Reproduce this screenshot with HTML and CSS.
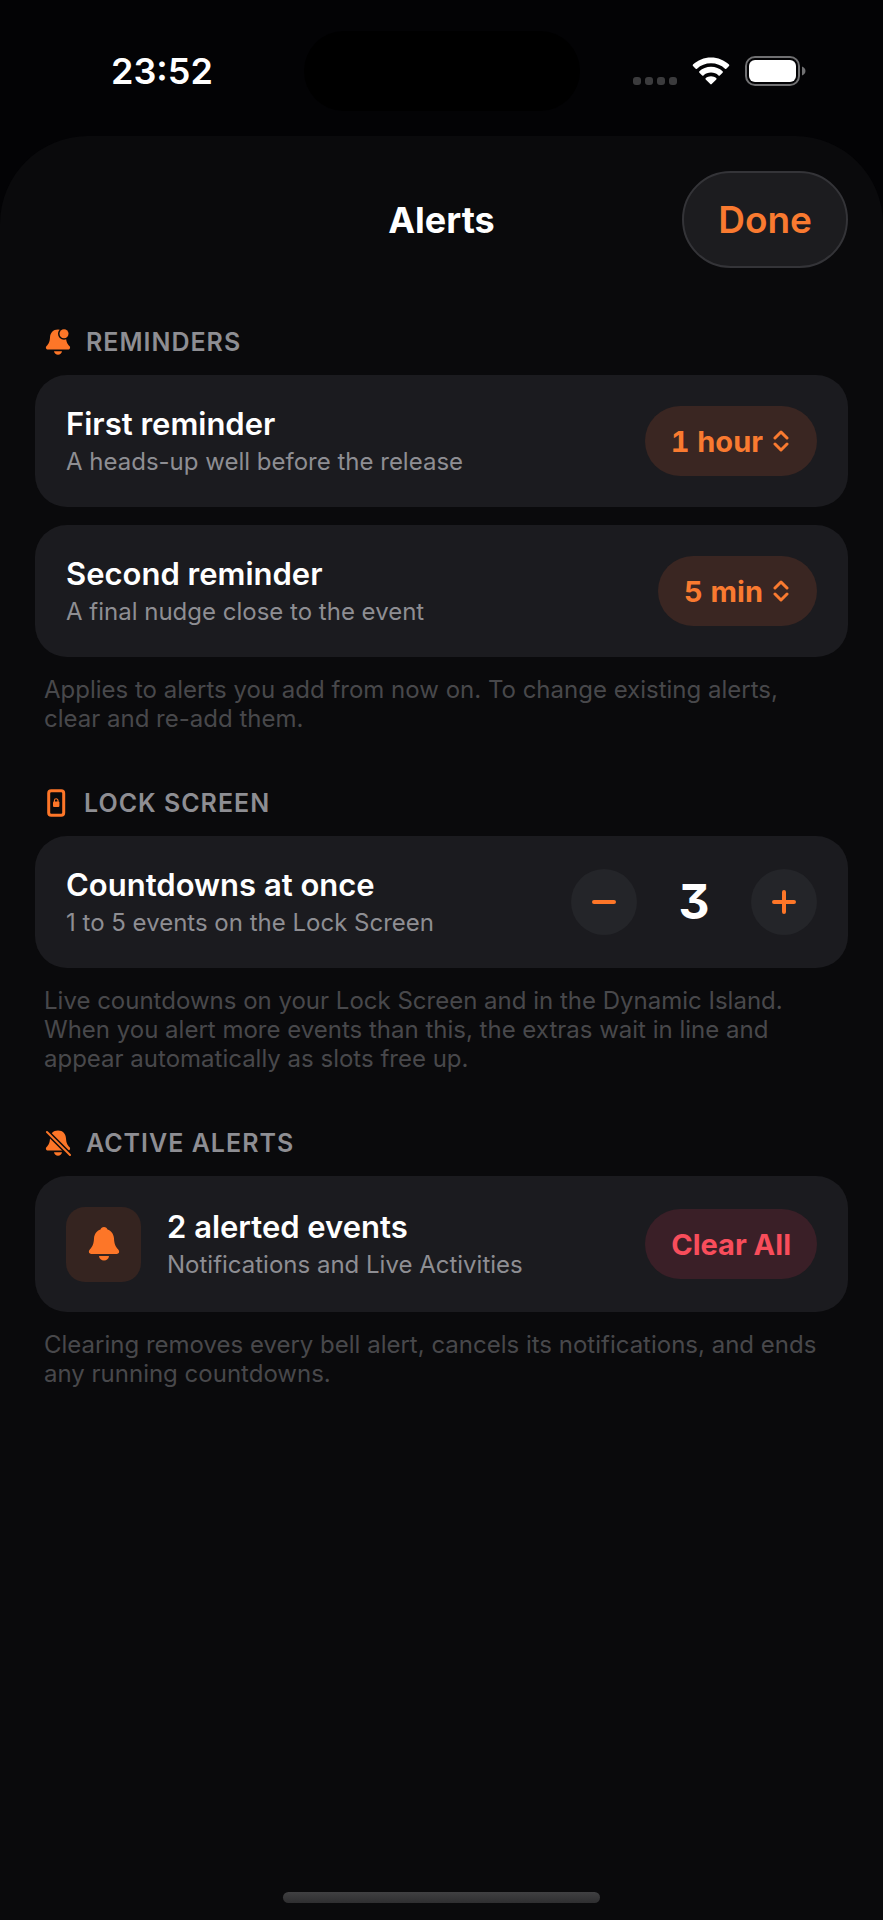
FILE: index.html
```html
<!DOCTYPE html>
<html lang="en">
<head>
  <meta charset="UTF-8">
  <meta name="viewport" content="width=device-width, initial-scale=1.0">
  <title>Alerts</title>
  <link rel="stylesheet" href="styles.css">
</head>
<body>
  <!-- Status Bar -->
  <div class="status-bar">
    <span class="time">23:52</span>
    <div class="island"></div>
    <div class="status-icons">
      <svg width="44" height="28" viewBox="0 0 44 28" fill="#3b3b3d">
        <rect x="0" y="20" width="8" height="8" rx="3"/>
        <rect x="12" y="20" width="8" height="8" rx="3"/>
        <rect x="24" y="20" width="8" height="8" rx="3"/>
        <rect x="36" y="20" width="8" height="8" rx="3"/>
      </svg>
      <svg width="38" height="28" viewBox="0 0 38 28" fill="#fff">
        <path d="M19 0.5C26 0.5 32.400 3.200 37 7.600Q37.700 8.300 37 9L34.300 11.700Q33.700 12.300 33 11.700C29.300 8.300 24.400 6.300 19 6.300S8.700 8.300 5 11.700Q4.300 12.300 3.700 11.700L1 9Q0.300 8.300 1 7.600C5.600 3.200 12 0.500 19 0.500Z"/>
        <path d="M19 9.800C23.500 9.800 27.500 11.500 30.600 14.300Q31.300 15 30.600 15.700L27.800 18.400Q27.200 19 26.500 18.400C24.500 16.600 21.900 15.600 19 15.600S13.500 16.600 11.500 18.400Q10.800 19 10.200 18.400L7.400 15.700Q6.700 15 7.400 14.300C10.500 11.500 14.500 9.800 19 9.800Z"/>
        <path d="M19 19.200C21 19.200 22.800 19.900 24.200 21Q25 21.700 24.300 22.400L19.700 27.100Q19 27.800 18.300 27.100L13.700 22.400Q13 21.700 13.800 21C15.200 19.900 17 19.200 19 19.200Z"/>
      </svg>
      <svg width="61" height="30" viewBox="0 0 61 30">
        <rect x="1" y="1" width="53" height="28" rx="9" fill="none" stroke="#707072" stroke-width="2"/>
        <rect x="4" y="4" width="47" height="22" rx="6" fill="#fff"/>
        <path d="M57 10.500C59 11.300 60.500 13 60.500 15S59 18.700 57 19.500Z" fill="#707072"/>
      </svg>
    </div>
  </div>

  <main class="sheet">
    <header class="sheet-header">
      <h1>Alerts</h1>
      <button class="done-btn">Done</button>
    </header>

    <!-- Reminders -->
    <section>
      <h2>
        <svg width="26" height="28" viewBox="0 0 26 28" fill="#fd7628">
          <path d="M13 1.500C8 1.500 5.300 5 5 9.500C4.700 14 3.800 15.600 1.600 18C0.200 19.600 1 21.500 3 21.500H23C25 21.500 25.800 19.600 24.400 18C22.200 15.600 21.300 14 21 9.500C20.700 5 18 1.500 13 1.500Z"/>
          <path d="M9 23.300H17C16.600 25.500 15 26.700 13 26.700S9.400 25.500 9 23.300Z"/>
          <circle cx="19" cy="5.800" r="6" fill="#0a0a0c"/>
          <circle cx="19" cy="5.800" r="4.500"/>
        </svg>
        Reminders
      </h2>
      <div class="card">
        <div class="card-text">
          <label class="card-title" for="first">First reminder</label>
          <p>A heads-up well before the release</p>
        </div>
        <div class="picker">
          <select id="first">
            <option>1 day</option>
            <option selected>1 hour</option>
            <option>30 min</option>
          </select>
          <svg width="16" height="22" viewBox="0 0 16 22"><path d="M2 8L8 2L14 8M2 14L8 20L14 14"/></svg>
        </div>
      </div>
      <div class="card">
        <div class="card-text">
          <label class="card-title" for="second">Second reminder</label>
          <p>A final nudge close to the event</p>
        </div>
        <div class="picker">
          <select id="second">
            <option>15 min</option>
            <option selected>5 min</option>
            <option>1 min</option>
          </select>
          <svg width="16" height="22" viewBox="0 0 16 22"><path d="M2 8L8 2L14 8M2 14L8 20L14 14"/></svg>
        </div>
      </div>
      <p class="note">Applies to alerts you add from now on. To change existing alerts, clear and re-add them.</p>
    </section>

    <!-- Lock Screen -->
    <section>
      <h2>
        <svg width="24" height="28" viewBox="0 0 24 28" fill="#fd7628">
          <rect x="3.700" y="1.700" width="15" height="24.600" rx="2.500" fill="none" stroke="#fd7628" stroke-width="3"/>
          <rect x="8" y="12.500" width="6.400" height="5.500" rx="1"/>
          <path d="M9.400 13V11.600A1.800 1.800 0 0 1 13 11.600V13" fill="none" stroke="#fd7628" stroke-width="1.100"/>
        </svg>
        Lock Screen
      </h2>
      <div class="card">
        <div class="card-text">
          <h3 class="card-title">Countdowns at once</h3>
          <p>1 to 5 events on the Lock Screen</p>
        </div>
        <div class="stepper">
          <button id="minus" aria-label="Fewer countdowns">
            <svg width="26" height="26" viewBox="0 0 26 26"><path d="M3 13H23"/></svg>
          </button>
          <output id="count">3</output>
          <button id="plus" aria-label="More countdowns">
            <svg width="26" height="26" viewBox="0 0 26 26"><path d="M3 13H23M13 3V23"/></svg>
          </button>
        </div>
      </div>
      <p class="note">Live countdowns on your Lock Screen and in the Dynamic Island. When you alert more events than this, the extras wait in line and appear automatically as slots free up.</p>
    </section>

    <!-- Active Alerts -->
    <section>
      <h2>
        <svg width="26" height="28" viewBox="0 0 26 28" fill="#fd7628">
          <path d="M13 1.500C8 1.500 5.300 5 5 9.500C4.700 14 3.800 15.600 1.600 18C0.200 19.600 1 21.500 3 21.500H23C25 21.500 25.800 19.600 24.400 18C22.200 15.600 21.300 14 21 9.500C20.700 5 18 1.500 13 1.500Z"/>
          <path d="M9 23.300H17C16.600 25.500 15 26.700 13 26.700S9.400 25.500 9 23.300Z"/>
          <path d="M2 3L25 26" stroke="#0a0a0c" stroke-width="5"/>
          <path d="M2 3L25 26" stroke="#fd7628" stroke-width="2" stroke-linecap="round"/>
        </svg>
        Active Alerts
      </h2>
      <div class="card card-events">
        <div class="bell-tile">
          <svg width="32" height="36" viewBox="0 0 32 36" fill="#fd7628">
            <path d="M16 1C14.200 1 13 2 12.500 3.500C8.700 4.800 6.300 8 6 12.500C5.700 18 4.700 20.300 2 23.300C-0.200 25.700 1 28 3.500 28H28.500C31 28 32.200 25.700 30 23.300C27.300 20.300 26.300 18 26 12.500C25.700 8 23.300 4.800 19.500 3.500C19 2 17.800 1 16 1Z"/>
            <path d="M11 30H21C20.700 32.800 18.700 34.500 16 34.500S11.300 32.800 11 30Z"/>
          </svg>
        </div>
        <div class="card-text">
          <h3 class="card-title">2 alerted events</h3>
          <p>Notifications and Live Activities</p>
        </div>
        <button class="clear-btn">Clear All</button>
      </div>
      <p class="note">Clearing removes every bell alert, cancels its notifications, and ends any running countdowns.</p>
    </section>
    <div class="home-bar"></div>
  </main>

  <script>
    const count = document.getElementById('count');

    // Keep the number of countdowns between 1 and 5
    function step(amount) {
      const next = Number(count.textContent) + amount;
      count.textContent = Math.min(5, Math.max(1, next));
    }

    document.getElementById('minus').addEventListener('click', () => step(-1));
    document.getElementById('plus').addEventListener('click', () => step(1));
  </script>
</body>
</html>
```
FILE: styles.css
```css
* {
  margin: 0;
  padding: 0;
  box-sizing: border-box;
}

body {
  font-family: Inter, sans-serif;
  background: #030305;
  color: #fff;
  display: flex;
  flex-direction: column;
  min-height: 100vh;
}

button, select {
  font-family: inherit;
  border: none;
  cursor: pointer;
}

svg {
  display: block;
  flex-shrink: 0;
}

/* Status Bar */
.status-bar {
  height: 136px;
  padding: 6px 77px 0;
  display: grid;
  grid-template-columns: 1fr 276px 1fr;
  align-items: center;
}

.time {
  padding-left: 34px;
  font-size: 36px;
  font-weight: 600;
}

.island {
  height: 80px;
  border-radius: 40px;
  background: #000;
}

.status-icons {
  display: flex;
  align-items: center;
  justify-content: flex-end;
  gap: 15px;
}

/* Sheet */
.sheet {
  flex: 1;
  display: flex;
  flex-direction: column;
  background: #0a0a0c;
  border-radius: 88px 88px 0 0;
  padding: 35px 35px 17px;
}

.sheet-header {
  display: grid;
  grid-template-columns: 1fr auto 1fr;
  align-items: center;
  margin-bottom: 58px;
}

h1 {
  grid-column: 2;
  font-size: 36px;
  font-weight: 700;
}

.done-btn {
  justify-self: end;
  height: 97px;
  padding: 0 34px;
  border: 2px solid #343438;
  border-radius: 49px;
  background: #1c1c1f;
  color: #f97a30;
  font-size: 37px;
  font-weight: 600;
}

section {
  margin-bottom: 54px;
}

h2 {
  display: flex;
  align-items: center;
  gap: 15px;
  margin: 0 0 17px 10px;
  line-height: 32px;
  font-size: 25px;
  font-weight: 600;
  letter-spacing: 1px;
  text-transform: uppercase;
  color: #8e8e93;
}

.card {
  display: flex;
  align-items: center;
  gap: 26px;
  padding: 28px 31px;
  border-radius: 32px;
  background: #1b1b1f;
}

.card + .card {
  margin-top: 18px;
}

.card-events {
  padding: 30px 31px;
}

.card-text {
  flex: 1;
}

.card-title {
  display: block;
  font-size: 31px;
  line-height: 42px;
  font-weight: 600;
}

.card-text p {
  font-size: 24px;
  line-height: 34px;
  color: #8e8e93;
}

.note {
  margin: 18px 9px 0;
  font-size: 24px;
  line-height: 29px;
  color: #48484b;
}

/* Controls */
.picker {
  position: relative;
}

.picker select {
  appearance: none;
  field-sizing: content;
  height: 70px;
  padding: 0 54px 0 26px;
  border-radius: 35px;
  background: #3a2622;
  color: #f97a30;
  font-size: 29px;
  font-weight: 700;
  font-feature-settings: "tnum";
}

.picker svg {
  position: absolute;
  top: 24px;
  right: 28px;
  pointer-events: none;
  fill: none;
  stroke: #f97a30;
  stroke-width: 3;
  stroke-linecap: round;
  stroke-linejoin: round;
}

.stepper {
  display: flex;
  align-items: center;
}

.stepper button {
  display: flex;
  align-items: center;
  justify-content: center;
  width: 66px;
  height: 66px;
  border-radius: 50%;
  background: #242529;
}

.stepper svg {
  fill: none;
  stroke: #fd7628;
  stroke-width: 4;
  stroke-linecap: round;
}

.stepper output {
  width: 114px;
  text-align: center;
  font-size: 48px;
  line-height: 58px;
  font-weight: 700;
  font-feature-settings: "cv09";
}

.bell-tile {
  display: flex;
  align-items: center;
  justify-content: center;
  width: 75px;
  height: 75px;
  border-radius: 19px;
  background: #352420;
}

.clear-btn {
  height: 70px;
  padding: 0 26px;
  border-radius: 35px;
  background: #3a1f27;
  color: #f84d5b;
  font-size: 29px;
  font-weight: 700;
}

.home-bar {
  width: 317px;
  height: 11px;
  margin: auto auto 0;
  border-radius: 6px;
  background: linear-gradient(#404042, #2e2e30);
}
```
